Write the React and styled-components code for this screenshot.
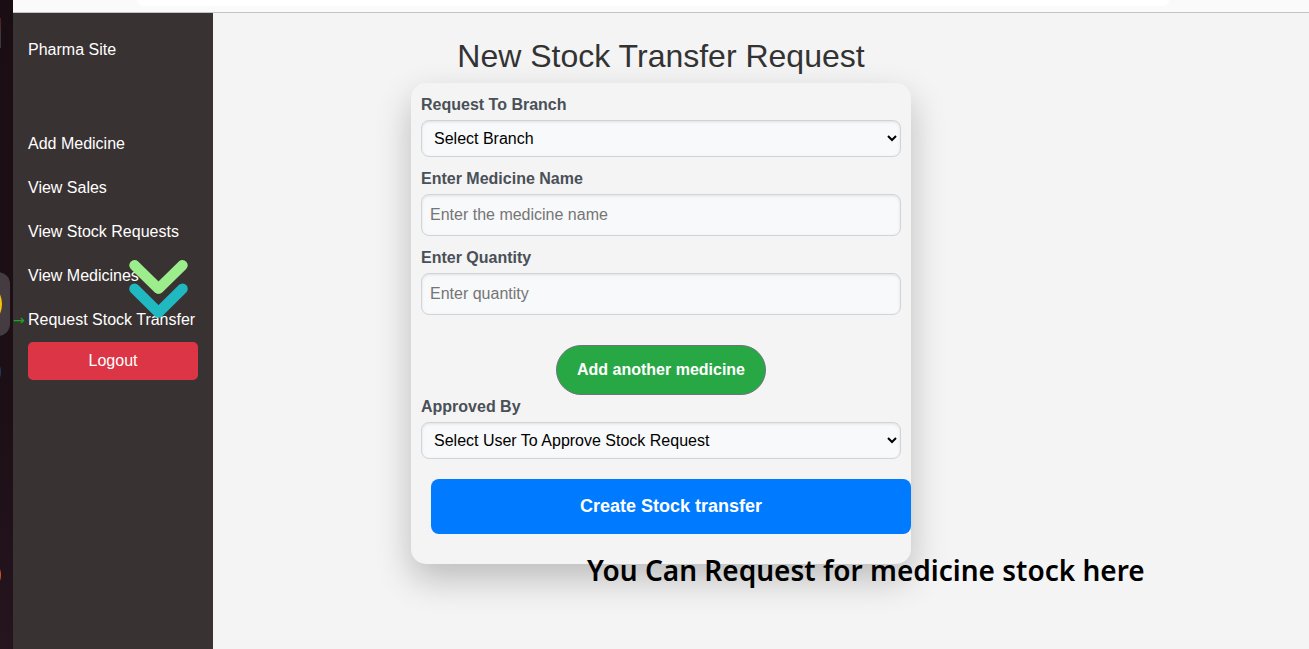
import React from "react";
import styled, { createGlobalStyle } from "styled-components";

const GlobalStyle = createGlobalStyle`
  *, *::before, *::after { box-sizing: border-box; }
  body {
    margin: 0;
    background: #f4f4f4;
    color: #333;
    font-family: "Liberation Sans", Arial, sans-serif;
    font-size: 16px;
    line-height: 24px;
  }
`;

const Desktop = styled.div`
  display: flex;
  min-height: 100vh;
`;

const Dock = styled.div`
  position: relative;
  flex: none;
  width: 13px;
  overflow: hidden;
  background: linear-gradient(#1a0e14 0%, #1c1016 65%, #26141f 100%);
`;

const ActiveTile = styled.div`
  position: absolute;
  top: 272px;
  left: -54px;
  width: 64px;
  height: 64px;
  border-radius: 12px;
  background: #453c42;
`;

const DockIcon = styled.div`
  position: absolute;
  top: ${(p) => p.$top}px;
  left: ${(p) => p.$visible - p.$size}px;
  width: ${(p) => p.$size}px;
  height: ${(p) => p.$size}px;
  border-radius: ${(p) => (p.$square ? "0" : "50%")};
  background: ${(p) => p.$color};
`;

const BrowserWindow = styled.div`
  display: flex;
  flex: 1;
  flex-direction: column;
  min-width: 0;
`;

const BrowserBar = styled.header`
  height: 13px;
  padding: 0 140px 0 124px;
  border-bottom: 1px solid #c4c4c4;
  background: #fafafa;
`;

const AddressBar = styled.div`
  height: 6px;
  border-radius: 0 0 20px 20px;
  background: #fff;
`;

const Page = styled.div`
  display: flex;
  flex: 1;
`;

const Sidebar = styled.nav`
  position: relative;
  flex: none;
  width: 200px;
  padding: 25px 15px;
  background: #393232;
`;

const Brand = styled.a`
  display: block;
  margin-bottom: 60px;
  color: #fff;
  text-decoration: none;
`;

const Menu = styled.ul`
  margin: 0;
  padding: 0;
  list-style: none;
`;

const MenuItem = styled.li`
  position: relative;
  padding: 10px 0;

  &::before {
    content: ${(p) => (p.$current ? '"→"' : "none")};
    position: absolute;
    left: -15px;
    color: #1ea51e;
    font-family: "DejaVu Sans", sans-serif;
    font-size: 14px;
  }
`;

const MenuLink = styled.a`
  color: #fff;
  text-decoration: none;
  white-space: nowrap;
`;

const LogoutButton = styled.button`
  width: 100%;
  height: 38px;
  border: 0;
  border-radius: 5px;
  background: #dc3545;
  color: #fff;
  font: inherit;
`;

const Chevrons = styled.svg`
  position: absolute;
  top: 246px;
  left: 115px;
  width: 61px;
  height: 60px;
  fill: none;
  stroke-width: 10.5;
  stroke-linecap: round;
  stroke-linejoin: round;
  pointer-events: none;
`;

const Main = styled.main`
  display: flex;
  flex: 1;
  flex-direction: column;
  align-items: center;
  min-width: 0;
  padding: 24px 200px 24px 0;
`;

const Title = styled.h2`
  margin: 0 0 8px;
  font-size: 32px;
  font-weight: 400;
  line-height: 38px;
`;

const Card = styled.form`
  position: relative;
  width: 100%;
  max-width: 500px;
  padding: 10px 10px 30px;
  border-radius: 15px;
  background: #f4f4f4;
  box-shadow: 0 15px 35px rgba(0, 0, 0, 0.23);
`;

const Field = styled.div`
  display: flex;
  flex-direction: column;
  gap: 3px;
  margin-bottom: ${(p) => p.$space || 10}px;
`;

const Label = styled.label`
  color: #495057;
  font-weight: 700;
  line-height: 24px;
`;

const controlLook = `
  width: 100%;
  border: 1px solid #ced4da;
  border-radius: 8px;
  background-color: #f8f9fa;
  box-shadow: inset 0 1px 3px rgba(0, 0, 0, 0.1);
  font: inherit;
`;

const Select = styled.select`
  ${controlLook}
  height: 37px;
  padding: 0 0 0 8px;
  color: #000;
`;

const Input = styled.input`
  ${controlLook}
  height: 42px;
  padding: 0 8px;
  color: #495057;

  &::placeholder { color: #757575; }
`;

const AddButton = styled.button`
  display: block;
  height: 50px;
  margin: 0 auto;
  padding: 0 20px;
  border: 1px solid #6c757d;
  border-radius: 25px;
  background: #28a745;
  color: #fff;
  font: inherit;
  font-weight: 700;
`;

const SubmitButton = styled.button`
  display: block;
  width: 100%;
  height: 55px;
  margin-left: 10px;
  padding: 0 0 2px;
  border: 0;
  border-radius: 8px;
  background: #007bff;
  color: #fff;
  font: inherit;
  font-size: 18px;
  font-weight: 700;
`;

const Caption = styled.p`
  position: absolute;
  top: 467px;
  left: 176px;
  margin: 0;
  color: #000;
  font-family: "Noto Sans", sans-serif;
  font-size: 28px;
  font-weight: 600;
  line-height: 40px;
  white-space: nowrap;
`;

const links = [
  "Add Medicine",
  "View Sales",
  "View Stock Requests",
  "View Medicines",
  "Request Stock Transfer",
];

export default function App() {
  return (
    <>
      <GlobalStyle />
      <Desktop>
        <Dock>
          <DockIcon $top={18} $size={30} $visible={1} $square $color="linear-gradient(#5a1d12, #3a3a3c 50%)" />
          <ActiveTile />
          <DockIcon $top={280} $size={48} $visible={2} $color="#fcc400" />
          <DockIcon $top={354} $size={36} $visible={1} $color="#17405c" />
          <DockIcon $top={556} $size={38} $visible={1} $color="#d9531e" />
        </Dock>
        <BrowserWindow>
          <BrowserBar>
            <AddressBar />
          </BrowserBar>
          <Page>
            <Sidebar>
              <Brand href="#">Pharma Site</Brand>
              <Menu>
                {links.map((text, i) => (
                  <MenuItem key={text} $current={i === links.length - 1}>
                    <MenuLink href="#">{text}</MenuLink>
                  </MenuItem>
                ))}
              </Menu>
              <LogoutButton type="button">Logout</LogoutButton>
              <Chevrons viewBox="0 0 61 60" aria-hidden="true">
                <path d="M6.500 6.300 L30.500 29.700 L54.500 6.300" stroke="#9bee8b" />
                <path d="M6.500 29.700 L30.500 53.400 L54.500 29.700" stroke="#20b9c1" />
              </Chevrons>
            </Sidebar>
            <Main>
              <Title>New Stock Transfer Request</Title>
              <Card>
                <Field>
                  <Label htmlFor="branch">Request To Branch</Label>
                  <Select id="branch">
                    <option>Select Branch</option>
                  </Select>
                </Field>
                <Field>
                  <Label htmlFor="medicine">Enter Medicine Name</Label>
                  <Input id="medicine" type="text" placeholder="Enter the medicine name" />
                </Field>
                <Field $space={30}>
                  <Label htmlFor="quantity">Enter Quantity</Label>
                  <Input id="quantity" type="text" placeholder="Enter quantity" />
                </Field>
                <AddButton type="button">Add another medicine</AddButton>
                <Field $space={20}>
                  <Label htmlFor="approver">Approved By</Label>
                  <Select id="approver">
                    <option>Select User To Approve Stock Request</option>
                  </Select>
                </Field>
                <SubmitButton type="submit">Create Stock transfer</SubmitButton>
                <Caption>You Can Request for medicine stock here</Caption>
              </Card>
            </Main>
          </Page>
        </BrowserWindow>
      </Desktop>
    </>
  );
}
